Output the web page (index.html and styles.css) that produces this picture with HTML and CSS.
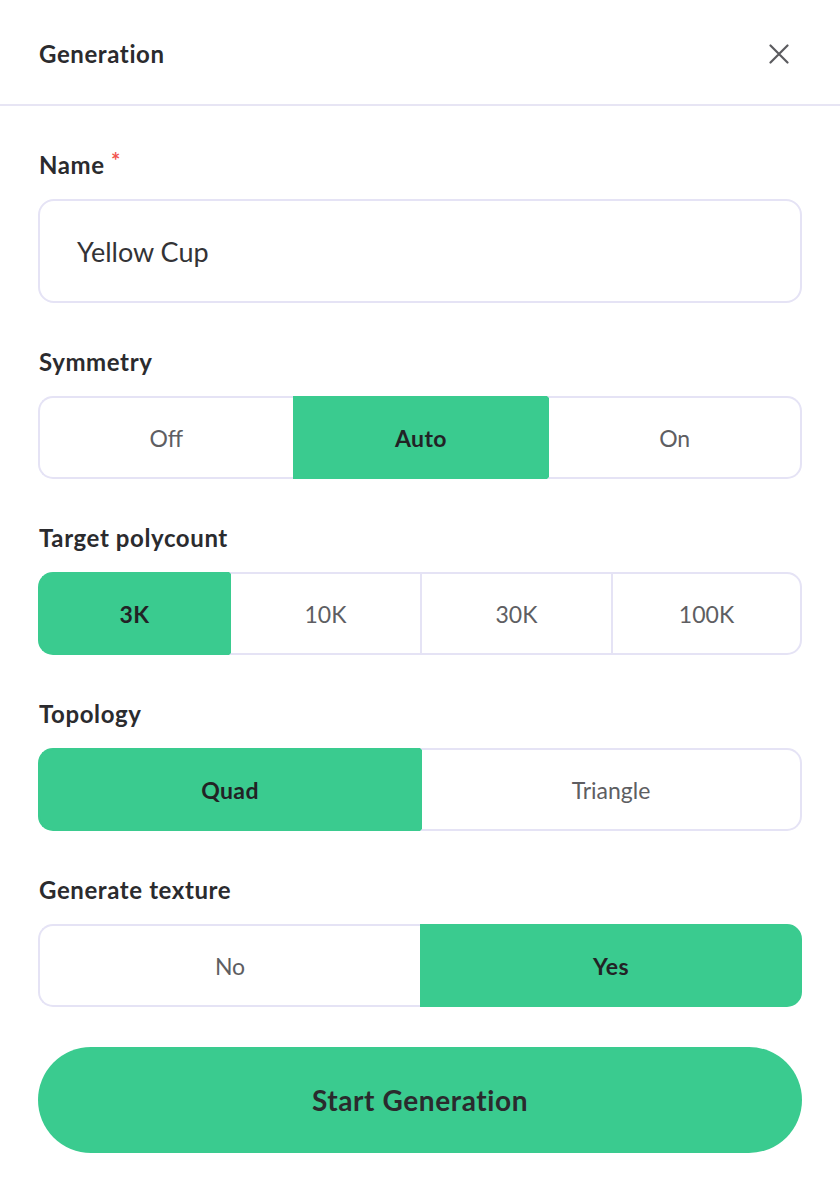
FILE: index.html
```html
<!DOCTYPE html>
<html lang="en">
<head>
<meta charset="utf-8">
<title>Generation</title>
<link rel="stylesheet" href="styles.css">
</head>
<body>
<div class="card">
  <div class="header">
    <h1 class="title">Generation</h1>
    <button class="close" aria-label="Close">
      <svg width="20" height="20" viewBox="0 0 20 20"><path d="M1.5 1.5 L18.5 18.5 M18.5 1.5 L1.5 18.5" stroke="#5b5b5f" stroke-width="2.2" stroke-linecap="round" fill="none"/></svg>
    </button>
  </div>
  <div class="body">
    <div class="field">
      <div class="label">Name <span class="req">*</span></div>
      <div class="input">Yellow Cup</div>
    </div>
    <div class="field">
      <div class="label">Symmetry</div>
      <div class="seg cols3">
        <div class="opt">Off</div>
        <div class="opt sel">Auto</div>
        <div class="opt">On</div>
      </div>
    </div>
    <div class="field">
      <div class="label">Target polycount</div>
      <div class="seg cols4">
        <div class="opt sel">3K</div>
        <div class="opt">10K</div>
        <div class="opt">30K</div>
        <div class="opt">100K</div>
      </div>
    </div>
    <div class="field">
      <div class="label">Topology</div>
      <div class="seg cols2">
        <div class="opt sel">Quad</div>
        <div class="opt">Triangle</div>
      </div>
    </div>
    <div class="field">
      <div class="label">Generate texture</div>
      <div class="seg cols2">
        <div class="opt">No</div>
        <div class="opt sel">Yes</div>
      </div>
    </div>
    <button class="start">Start Generation</button>
  </div>
</div>
</body>
</html>
```

FILE: styles.css
```css
* { box-sizing: border-box; }
html, body { margin: 0; padding: 0; background: #ffffff; }
body {
  font-family: "Lato", "Open Sans", "Liberation Sans", sans-serif;
  color: #2b2b2e;
}
.card {
  width: 840px;
  height: 1184px;
  background: #ffffff;
  border-radius: 30px;
  overflow: hidden;
}
.header {
  height: 106px;
  border-bottom: 2px solid #e7e5f4;
  display: flex;
  align-items: center;
  justify-content: space-between;
  padding: 3px 51px 0 39px;
}
.title {
  margin: 0;
  font-size: 24px;
  font-weight: 700;
  letter-spacing: 0.6px;
  color: #2b2b2e;
}
.close {
  border: 0;
  background: none;
  padding: 0;
  width: 20px;
  height: 20px;
  display: flex;
}
.body {
  padding: 40px 38px 0 38px;
  display: flex;
  flex-direction: column;
  gap: 44px;
}
.field {
  display: flex;
  flex-direction: column;
  gap: 19px;
}
.label {
  font-size: 24px;
  line-height: 30px;
  font-weight: 700;
  letter-spacing: 0.6px;
  padding-left: 1px;
  color: #2b2b2e;
}
.req { color: #f2554f; font-size: 22px; vertical-align: 5px; }
.input {
  height: 104px;
  border: 2px solid #e5e3f5;
  border-radius: 16px;
  display: flex;
  align-items: center;
  padding-left: 37px;
  font-size: 27px;
  color: #333336;
}
.seg {
  height: 83px;
  display: grid;
}
.cols2 { grid-template-columns: 1fr 1fr; }
.cols3 { grid-template-columns: 1fr 1fr 1fr; }
.cols4 { grid-template-columns: 1fr 1fr 1fr 1fr; }
.opt {
  display: flex;
  align-items: center;
  justify-content: center;
  font-size: 23px;
  color: #5e5e62;
  border: 2px solid #e5e3f5;
  border-right: 0;
  background: #ffffff;
}
.opt:first-child { border-radius: 15px 0 0 15px; }
.opt:last-child { border-right: 2px solid #e5e3f5; border-radius: 0 15px 15px 0; }
.opt.sel {
  background: #3acb8f;
  border-color: #3acb8f;
  color: #222225;
  font-weight: 700;
  letter-spacing: 0.4px;
}
.opt.sel + .opt { border-left-color: #3acb8f; }
.start {
  margin-top: -4px;
  height: 106px;
  border: 0;
  border-radius: 53px;
  background: #3acb8f;
  font-family: inherit;
  font-size: 28px;
  font-weight: 700;
  letter-spacing: 0.6px;
  color: #2a2a2d;
}
```
